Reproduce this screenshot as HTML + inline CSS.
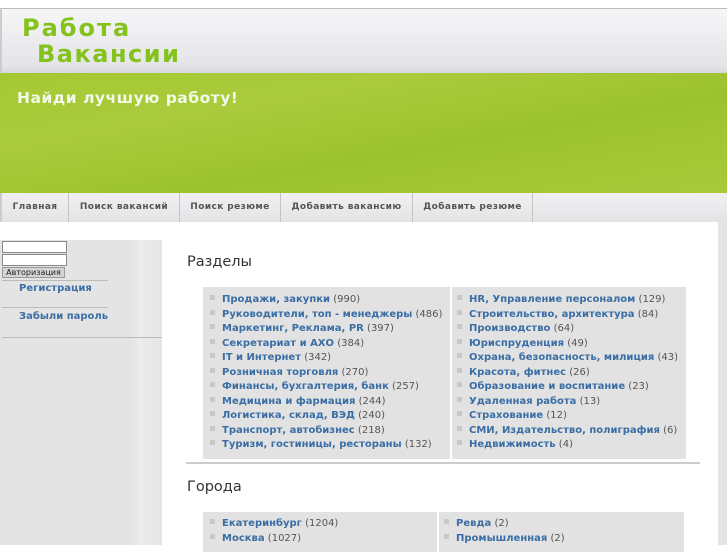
<!DOCTYPE html>
<html><head><meta charset="utf-8"><style>
*{margin:0;padding:0;box-sizing:border-box}
body{width:727px;height:545px;overflow:hidden;background:#fff;font-family:"DejaVu Sans","Liberation Sans",sans-serif;position:relative}
.abs{position:absolute}
#hdr{left:0;top:8px;width:727px;height:65px;background:linear-gradient(#f6f6f8,#e4e4e8 90%,#d8d8dc);border-top:1px solid #bbb;border-left:2px solid #ccc}
.logo{font-family:"DejaVu Sans",sans-serif;font-weight:bold;color:#84c21c;font-size:24px;letter-spacing:2px;line-height:26px}
#green{left:0;top:73px;width:727px;height:120px;background:linear-gradient(170deg,#a4c832 0%,#aacb3c 30%,#9cc22e 60%,#a8ca3a 100%)}
#nav{left:0;top:193px;width:727px;height:29px;background:linear-gradient(#f0f0f2,#e4e4e6);border-left:2px solid #ccc}
#nav span{position:absolute;top:0;height:29px;line-height:29px;font-size:9px;font-weight:bold;color:#555;border-right:1px solid #c4c4c4;text-align:center;letter-spacing:.4px}
#side{left:0;top:240px;width:162px;height:305px;background:linear-gradient(90deg,#e4e4e4 0,#e4e4e4 130px,#ececec 140px,#e6e6e6 162px)}
.in{position:absolute;left:2px;width:65px;height:12px;background:#fff;border:1px solid #888}
.lnk{color:#3a6ea5;font-weight:bold;font-size:10px}
h2{position:absolute;font-weight:normal;font-size:14.5px;color:#333}
.box{position:absolute;background:#e2e2e2}
.col{position:absolute;top:0;font-size:10px;line-height:14.5px;color:#555;white-space:nowrap}
.col div:before{content:"";display:inline-block;width:5px;height:5px;background:#c8c8c8;margin-right:7px;vertical-align:2px}
.col b{color:#3a6ea5}
</style></head><body>
<div id="hdr" class="abs">
<div class="logo abs" style="left:20px;top:6px">Работа</div>
<div class="logo abs" style="left:35px;top:32px;letter-spacing:1.5px">Вакансии</div>
</div>
<div id="green" class="abs"><div class="abs" style="left:17px;top:16px;color:#f4f8e8;font-weight:bold;font-size:15.5px;letter-spacing:.5px">Найди лучшую работу!</div></div>
<div id="nav" class="abs">
<span style="left:0;width:67px">Главная</span>
<span style="left:67px;width:111px">Поиск вакансий</span>
<span style="left:178px;width:101px">Поиск резюме</span>
<span style="left:279px;width:132px">Добавить вакансию</span>
<span style="left:411px;width:120px">Добавить резюме</span>
</div>
<div class="abs" style="left:718px;top:222px;width:9px;height:323px;background:#e4e4e4"></div>
<div id="side" class="abs">
<div class="in" style="top:1px"></div>
<div class="in" style="top:14px"></div>
<div class="abs" style="left:2px;top:27px;width:63px;height:11px;background:#d4d4d4;border:1px solid #999;font-size:8px;line-height:9px;text-align:center;color:#222">Авторизация</div>
<div class="abs" style="left:2px;top:40px;width:106px;height:1px;background:#bbb"></div>
<div class="abs lnk" style="left:19px;top:43px">Регистрация</div>
<div class="abs" style="left:2px;top:67px;width:106px;height:1px;background:#bbb"></div>
<div class="abs lnk" style="left:19px;top:71px">Забыли пароль</div>
<div class="abs" style="left:2px;top:97px;width:160px;height:1px;background:#bbb"></div>
</div>
<h2 style="left:187px;top:254px">Разделы</h2>
<div class="box" style="left:203px;top:287px;width:483px;height:172px">
<div class="abs" style="left:247px;top:0;width:2px;height:172px;background:#fff"></div>
<div class="col" style="left:7px;top:6px">
<div><b>Продажи, закупки</b> (990)</div><div><b>Руководители, топ - менеджеры</b> (486)</div><div><b>Маркетинг, Реклама, PR</b> (397)</div><div><b>Секретариат и АХО</b> (384)</div><div><b>IT и Интернет</b> (342)</div><div><b>Розничная торговля</b> (270)</div><div><b>Финансы, бухгалтерия, банк</b> (257)</div><div><b>Медицина и фармация</b> (244)</div><div><b>Логистика, склад, ВЭД</b> (240)</div><div><b>Транспорт, автобизнес</b> (218)</div><div><b>Туризм, гостиницы, рестораны</b> (132)</div>
</div>
<div class="col" style="left:254px;top:6px">
<div><b>HR, Управление персоналом</b> (129)</div><div><b>Строительство, архитектура</b> (84)</div><div><b>Производство</b> (64)</div><div><b>Юриспруденция</b> (49)</div><div><b>Охрана, безопасность, милиция</b> (43)</div><div><b>Красота, фитнес</b> (26)</div><div><b>Образование и воспитание</b> (23)</div><div><b>Удаленная работа</b> (13)</div><div><b>Страхование</b> (12)</div><div><b>СМИ, Издательство, полиграфия</b> (6)</div><div><b>Недвижимость</b> (4)</div>
</div></div>
<div class="abs" style="left:186px;top:462px;width:514px;height:2px;background:#ccc"></div>
<h2 style="left:187px;top:479px">Города</h2>
<div class="box" style="left:203px;top:512px;width:481px;height:40px">
<div class="abs" style="left:234px;top:0;width:2px;height:40px;background:#fff"></div>
<div class="col" style="left:7px;top:5px"><div><b>Екатеринбург</b> (1204)</div><div><b>Москва</b> (1027)</div></div>
<div class="col" style="left:241px;top:5px"><div><b>Ревда</b> (2)</div><div><b>Промышленная</b> (2)</div></div>
</div>
</body></html>
